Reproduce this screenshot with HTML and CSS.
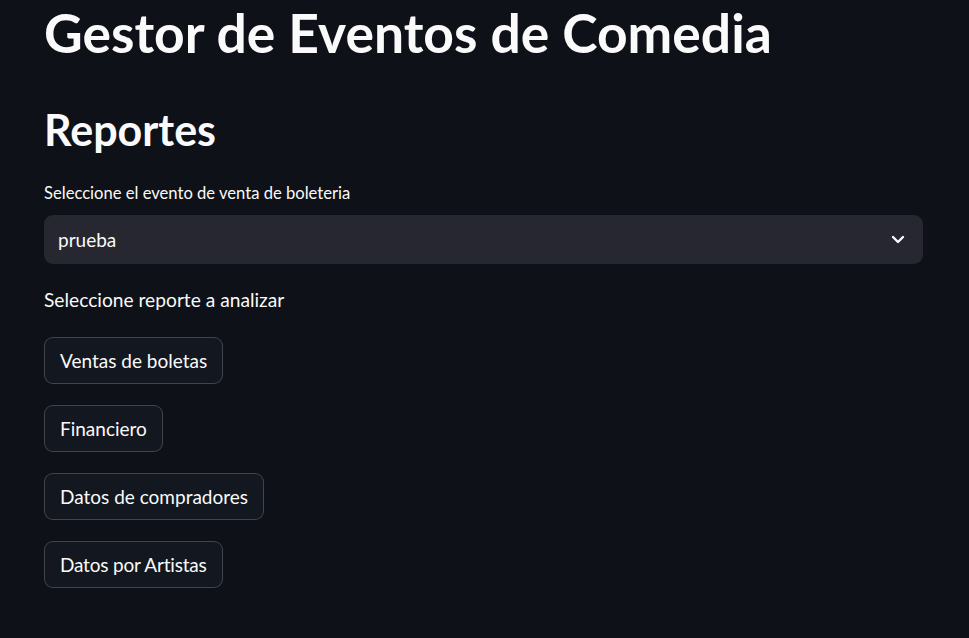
FILE: index.html
```html
<!DOCTYPE html>
<html lang="es">
<head>
<meta charset="utf-8">
<title>Gestor de Eventos de Comedia</title>
<link rel="stylesheet" href="styles.css">
</head>
<body>
<main class="main">
  <h1 class="title">Gestor de Eventos de Comedia</h1>
  <h2 class="subtitle">Reportes</h2>
  <div class="field">
    <label class="field-label">Seleccione el evento de venta de boleteria</label>
    <div class="select">
      <span class="select-value">prueba</span>
      <svg class="chevron" width="14" height="10" viewBox="0 0 14 10" aria-hidden="true">
        <path d="M2 2 L7 7 L12 2" fill="none" stroke="#fafafa" stroke-width="2.4" stroke-linecap="round" stroke-linejoin="round"/>
      </svg>
    </div>
  </div>
  <p class="text">Seleccione reporte a analizar</p>
  <div class="buttons">
    <button class="btn">Ventas de boletas</button>
    <button class="btn">Financiero</button>
    <button class="btn">Datos de compradores</button>
    <button class="btn btn-tight">Datos por Artistas</button>
  </div>
</main>
</body>
</html>
```
FILE: styles.css
```css
html, body {
  margin: 0;
  padding: 0;
  background: #0e1117;
}
body {
  color: #fafafa;
  font-family: "Lato", "Noto Sans", sans-serif;
}
.main {
  width: 879px;
  padding: 0 0 0 44px;
  display: flex;
  flex-direction: column;
}
.title {
  margin: 0;
  font-size: 53.4px;
  font-weight: 700;
  line-height: 64px;
  height: 64px;
  white-space: nowrap;
}
.subtitle {
  margin: 41px 0 0 0;
  font-size: 43px;
  font-weight: 700;
  line-height: 50px;
  height: 50px;
}
.field {
  margin-top: 28px;
  display: flex;
  flex-direction: column;
}
.field-label {
  font-size: 16.6px;
  line-height: 20px;
  height: 20px;
  margin-bottom: 12px;
}
.select {
  height: 49px;
  background: #262730;
  border-radius: 9px;
  display: flex;
  align-items: center;
  justify-content: space-between;
  padding: 0 18px 0 14px;
}
.select-value {
  font-size: 19px;
}
.chevron {
  display: block;
}
.text {
  margin: 23px 0 0 0;
  font-size: 19.2px;
  line-height: 26px;
  height: 26px;
}
.buttons {
  margin-top: 24px;
  display: flex;
  flex-direction: column;
  align-items: flex-start;
  gap: 21px;
}
.btn {
  height: 47px;
  padding: 0 15px;
  background: #13171f;
  color: #fafafa;
  border: 1px solid rgba(250, 250, 250, 0.2);
  border-radius: 9px;
  font-family: inherit;
  font-size: 19px;
  cursor: pointer;
}
.btn-tight {
  letter-spacing: -0.2px;
}
```
